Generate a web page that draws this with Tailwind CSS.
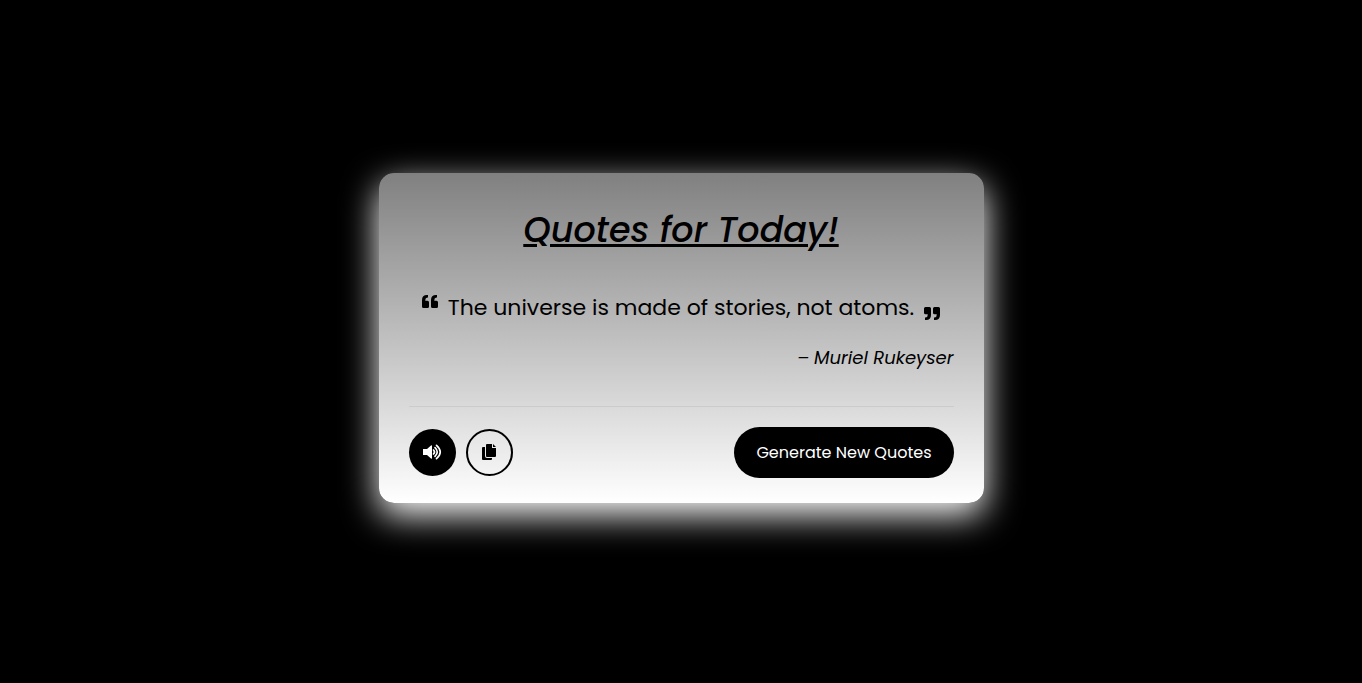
<!DOCTYPE html>
<html lang="en">
<head>
<meta charset="utf-8">
<meta name="viewport" content="width=device-width, initial-scale=1">
<title>Quotes for Today!</title>
<script src="https://cdn.jsdelivr.net/npm/@tailwindcss/browser@4"></script>
</head>
<body class="flex min-h-screen items-center justify-center bg-black px-2 pb-2 font-[Poppins,Inter,sans-serif] text-black">
<main class="w-full max-w-[605px] rounded-[15px] bg-[linear-gradient(#808080,#ffffff)] px-[30px] pt-[30px] pb-[25px] shadow-[0_12px_35px_#ffffff]">
  <h1 class="text-center text-[35px] leading-[54px] font-medium italic underline decoration-3 underline-offset-2">Quotes for Today!</h1>
  <section class="mt-[34px]">
    <div class="flex justify-center gap-[10px]">
      <svg class="mt-1 h-[13px] w-4 shrink-0" viewBox="0 0 16 13" aria-hidden="true"><path d="M0 5Q0 0 5 0h1v2.500H5.500Q3.300 2.500 3.300 5v.8h2.200Q7 5.800 7 7.300v4.200Q7 13 5.500 13h-4Q0 13 0 11.500ZM9 5q0-5 5-5h1v2.500H14.500q-2.200 0-2.200 2.500v.8h2.200q1.500 0 1.500 1.500v4.200q0 1.500-1.500 1.500h-4Q9 13 9 11.500Z"/></svg>
      <p class="text-center text-[22px] leading-[34px]">The universe is made of stories, not atoms.</p>
      <svg class="mb-[5px] h-[13px] w-4 shrink-0 self-end" viewBox="0 0 16 13" aria-hidden="true"><path transform="rotate(180 8 6.500)" d="M0 5Q0 0 5 0h1v2.500H5.500Q3.300 2.500 3.300 5v.8h2.200Q7 5.800 7 7.300v4.200Q7 13 5.500 13h-4Q0 13 0 11.500ZM9 5q0-5 5-5h1v2.500H14.500q-2.200 0-2.200 2.500v.8h2.200q1.500 0 1.500 1.500v4.200q0 1.500-1.500 1.500h-4Q9 13 9 11.500Z"/></svg>
    </div>
    <p class="mt-[19px] flex justify-end gap-[5px] text-[18px] leading-[27px] italic"><span>–</span><span>Muriel Rukeyser</span></p>
  </section>
  <footer class="mt-[35px] flex items-center justify-between border-t border-[#cccccc] pt-5">
    <div class="flex gap-[10px]">
      <button type="button" aria-label="Read quote aloud" class="flex size-[47px] items-center justify-center rounded-full bg-black text-white">
        <svg class="h-4 w-5" viewBox="0 0 20 16" fill="none" stroke="currentColor" stroke-width="1.700" stroke-linecap="round" aria-hidden="true"><path fill="currentColor" stroke="none" d="M1 5h4l4-3.600Q10 .8 10 2v12q0 1.200-1 .6L5 11H1Z"/><path d="M11.500 6q2 2 0 4M13 3.700q4.500 4.300 0 8.600M14.500 1.300q7.500 6.700 0 13.400"/></svg>
      </button>
      <button type="button" aria-label="Copy quote" class="flex size-[47px] items-center justify-center rounded-full border-2 border-black">
        <svg class="h-4 w-[14px]" viewBox="0 0 14 16" fill="currentColor" aria-hidden="true"><path d="M5 0H10v4h4v8q0 1-1 1H5Q4 13 4 12V1Q4 0 5 0ZM11 0l3 3h-3ZM1 3H3v9q0 2 2 2h5v1Q10 16 9 16H1Q0 16 0 15V4Q0 3 1 3Z"/></svg>
      </button>
    </div>
    <button type="button" class="rounded-full bg-black px-[22px] py-[13px] text-[16px] leading-[25px] text-white">Generate New Quotes</button>
  </footer>
</main>
</body>
</html>
